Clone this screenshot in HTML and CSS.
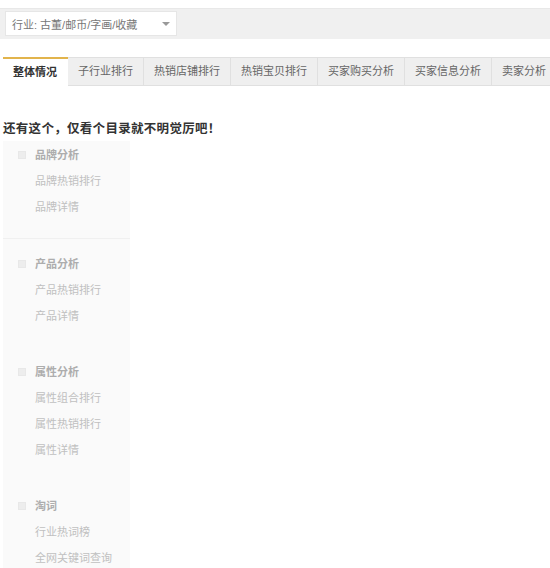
FILE: index.html
```html
<!DOCTYPE html>
<html lang="zh-CN">
<head>
    <meta charset="UTF-8">
    <title>行业分析</title>
    <link rel="stylesheet" href="styles.css">
</head>
<body>
    <div class="filter-bar">
        <div class="select-box">
            <span class="select-text">行业: 古董/邮币/字画/收藏</span>
            <span class="caret"></span>
        </div>
    </div>

    <ul class="tabs">
        <li class="tab active">整体情况</li>
        <li class="tab">子行业排行</li>
        <li class="tab">热销店铺排行</li>
        <li class="tab">热销宝贝排行</li>
        <li class="tab">买家购买分析</li>
        <li class="tab">买家信息分析</li>
        <li class="tab">卖家分析</li>
    </ul>

    <h2 class="heading">还有这个，仅看个目录就不明觉厉吧！</h2>

    <div class="sidebar">
        <div class="group first">
            <div class="row head"><span class="box"></span>品牌分析</div>
            <div class="row">品牌热销排行</div>
            <div class="row">品牌详情</div>
        </div>
        <div class="group">
            <div class="row head"><span class="box"></span>产品分析</div>
            <div class="row">产品热销排行</div>
            <div class="row">产品详情</div>
        </div>
        <div class="group">
            <div class="row head"><span class="box"></span>属性分析</div>
            <div class="row">属性组合排行</div>
            <div class="row">属性热销排行</div>
            <div class="row">属性详情</div>
        </div>
        <div class="group">
            <div class="row head"><span class="box"></span>淘词</div>
            <div class="row">行业热词榜</div>
            <div class="row">全网关键词查询</div>
        </div>
    </div>
</body>
</html>
```

FILE: styles.css
```css
* {
    margin: 0;
    padding: 0;
    box-sizing: border-box;
}

body {
    font-family: "Liberation Sans", "Noto Sans CJK SC", sans-serif;
    font-size: 11px;
    color: #666;
    background: #fff;
    width: 550px;
    height: 568px;
    overflow: hidden;
}

.filter-bar {
    margin-top: 8px;
    height: 31px;
    background: #f0f0f0;
    border-top: 1px solid #e8e8e8;
    padding: 2px 0 0 5px;
}

.select-box {
    width: 172px;
    height: 25px;
    background: #fff;
    border: 1px solid #e6e6e6;
    display: flex;
    align-items: center;
    justify-content: space-between;
    padding: 0 6px 0 6px;
}

.select-text {
    color: #777;
}

.caret {
    width: 0;
    height: 0;
    border-left: 4px solid transparent;
    border-right: 4px solid transparent;
    border-top: 4px solid #999;
}

.tabs {
    list-style: none;
    display: flex;
    margin: 18px 0 0 3px;
    white-space: nowrap;
}

.tab {
    flex: none;
    height: 29px;
    line-height: 27px;
    padding: 0 10px;
    background: #efefef;
    border: 1px solid #e0e0e0;
    border-left: none;
    color: #666;
}

.tab.active {
    background: #fff;
    border: none;
    border-top: 2px solid #e2b44c;
    color: #333;
    font-weight: bold;
    padding: 0 11px 0 10px;
}

.heading {
    margin: 34px 0 0 3px;
    font-size: 12.5px;
    font-weight: bold;
    letter-spacing: 0.3px;
    color: #333;
    line-height: 18px;
}

.sidebar {
    width: 127px;
    margin: 3px 0 0 3px;
    background: #fafafa;
    padding-bottom: 20px;
}

.group {
    padding: 12px 0 18px;
}

.group.first {
    padding: 1px 0 18px;
    border-bottom: 1px solid #f0f0f0;
}

.row {
    height: 26px;
    line-height: 26px;
    padding-left: 32px;
    color: #c0c0c0;
}

.row.head {
    position: relative;
    font-weight: bold;
    color: #adadad;
}

.box {
    position: absolute;
    left: 15px;
    top: 9px;
    width: 8px;
    height: 8px;
    background: #ededed;
    border: 1px solid #e8e8e8;
}
```
